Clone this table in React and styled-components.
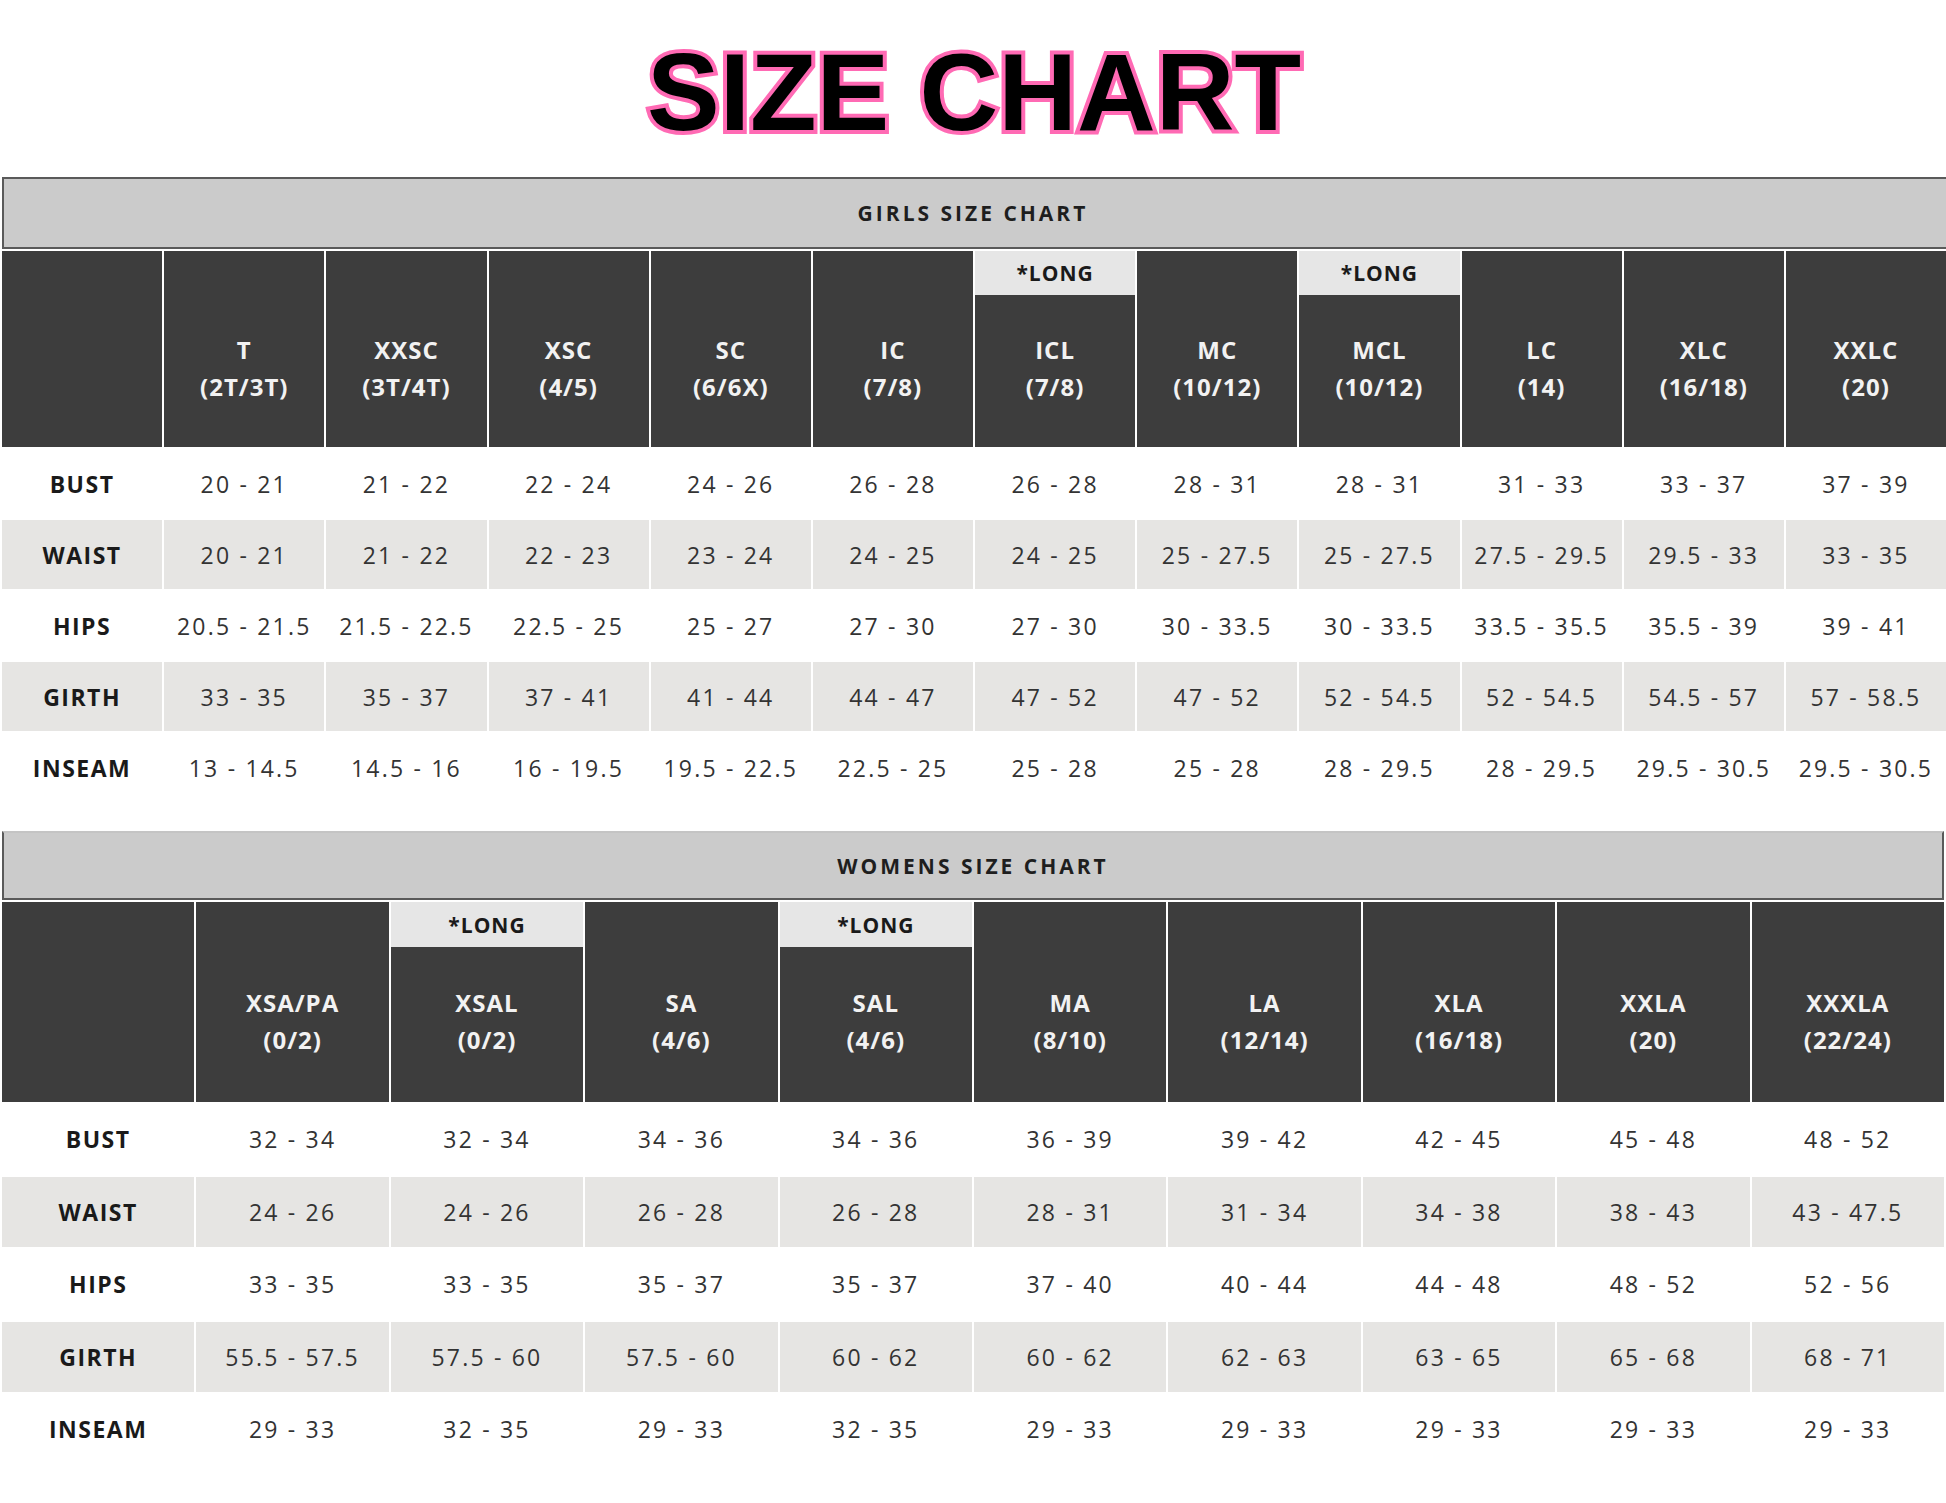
import styled, { createGlobalStyle } from 'styled-components';

const GlobalStyle = createGlobalStyle`
  html, body {
    margin: 0;
    padding: 0;
    background: #ffffff;
  }
  body {
    font-family: 'Open Sans', 'Liberation Sans', sans-serif;
    color: #333333;
  }
`;

const girls = {
  title: 'GIRLS SIZE CHART',
  barHeight: 72,
  headHeight: 196,
  bandHeight: 44,
  rowHeight: 69,
  sizes: [
    { name: 'T', fit: '(2T/3T)' },
    { name: 'XXSC', fit: '(3T/4T)' },
    { name: 'XSC', fit: '(4/5)' },
    { name: 'SC', fit: '(6/6X)' },
    { name: 'IC', fit: '(7/8)' },
    { name: 'ICL', fit: '(7/8)', long: true },
    { name: 'MC', fit: '(10/12)' },
    { name: 'MCL', fit: '(10/12)', long: true },
    { name: 'LC', fit: '(14)' },
    { name: 'XLC', fit: '(16/18)' },
    { name: 'XXLC', fit: '(20)' },
  ],
  rows: [
    ['BUST', '20 - 21', '21 - 22', '22 - 24', '24 - 26', '26 - 28', '26 - 28', '28 - 31', '28 - 31', '31 - 33', '33 - 37', '37 - 39'],
    ['WAIST', '20 - 21', '21 - 22', '22 - 23', '23 - 24', '24 - 25', '24 - 25', '25 - 27.5', '25 - 27.5', '27.5 - 29.5', '29.5 - 33', '33 - 35'],
    ['HIPS', '20.5 - 21.5', '21.5 - 22.5', '22.5 - 25', '25 - 27', '27 - 30', '27 - 30', '30 - 33.5', '30 - 33.5', '33.5 - 35.5', '35.5 - 39', '39 - 41'],
    ['GIRTH', '33 - 35', '35 - 37', '37 - 41', '41 - 44', '44 - 47', '47 - 52', '47 - 52', '52 - 54.5', '52 - 54.5', '54.5 - 57', '57 - 58.5'],
    ['INSEAM', '13 - 14.5', '14.5 - 16', '16 - 19.5', '19.5 - 22.5', '22.5 - 25', '25 - 28', '25 - 28', '28 - 29.5', '28 - 29.5', '29.5 - 30.5', '29.5 - 30.5'],
  ],
};

const womens = {
  title: 'WOMENS SIZE CHART',
  barHeight: 69,
  headHeight: 200,
  bandHeight: 45,
  rowHeight: 70.5,
  closed: true,
  sizes: [
    { name: 'XSA/PA', fit: '(0/2)' },
    { name: 'XSAL', fit: '(0/2)', long: true },
    { name: 'SA', fit: '(4/6)' },
    { name: 'SAL', fit: '(4/6)', long: true },
    { name: 'MA', fit: '(8/10)' },
    { name: 'LA', fit: '(12/14)' },
    { name: 'XLA', fit: '(16/18)' },
    { name: 'XXLA', fit: '(20)' },
    { name: 'XXXLA', fit: '(22/24)' },
  ],
  rows: [
    ['BUST', '32 - 34', '32 - 34', '34 - 36', '34 - 36', '36 - 39', '39 - 42', '42 - 45', '45 - 48', '48 - 52'],
    ['WAIST', '24 - 26', '24 - 26', '26 - 28', '26 - 28', '28 - 31', '31 - 34', '34 - 38', '38 - 43', '43 - 47.5'],
    ['HIPS', '33 - 35', '33 - 35', '35 - 37', '35 - 37', '37 - 40', '40 - 44', '44 - 48', '48 - 52', '52 - 56'],
    ['GIRTH', '55.5 - 57.5', '57.5 - 60', '57.5 - 60', '60 - 62', '60 - 62', '62 - 63', '63 - 65', '65 - 68', '68 - 71'],
    ['INSEAM', '29 - 33', '32 - 35', '29 - 33', '32 - 35', '29 - 33', '29 - 33', '29 - 33', '29 - 33', '29 - 33'],
  ],
};

function SizeTable({ chart }) {
  const cols = chart.sizes.length + 1;

  return (
    <Section closed={chart.closed}>
      <SectionBar height={chart.barHeight} closed={chart.closed}>
        {chart.title}
      </SectionBar>
      <Grid cols={cols} head={chart.headHeight} row={chart.rowHeight}>
        <HeadCell band={chart.bandHeight} />
        {chart.sizes.map((size) => (
          <HeadCell key={size.name + size.fit} band={chart.bandHeight}>
            <LongTag long={size.long}>{size.long ? '*LONG' : ''}</LongTag>
            <HeadMain>
              <span>{size.name}</span>
              <span>{size.fit}</span>
            </HeadMain>
          </HeadCell>
        ))}
        {chart.rows.map((row, r) =>
          row.map((value, c) =>
            c === 0 ? (
              <RowLabel key={`${r}-${c}`} shaded={r % 2 === 1}>
                {value}
              </RowLabel>
            ) : (
              <BodyCell key={`${r}-${c}`} shaded={r % 2 === 1}>
                {value}
              </BodyCell>
            )
          )
        )}
      </Grid>
    </Section>
  );
}

export default function App() {
  return (
    <>
      <GlobalStyle />
      <Page>
        <TitleWrap>
          <Title>SIZE CHART</Title>
        </TitleWrap>
        <SizeTable chart={girls} />
        <Spacer />
        <SizeTable chart={womens} />
      </Page>
    </>
  );
}

const Page = styled.div`
  width: 1946px;
  min-height: 1503px;
  overflow: hidden;
  padding: 0 0 0 2px;
  box-sizing: border-box;
`;

const TitleWrap = styled.header`
  height: 177px;
  padding-top: 37px;
  box-sizing: border-box;
  display: flex;
  justify-content: center;
  align-items: flex-start;
`;

const Title = styled.h1`
  margin: 0;
  font-family: 'Liberation Sans', Arial, sans-serif;
  font-weight: 700;
  font-size: 109px;
  line-height: 110px;
  color: #000000;
  -webkit-text-stroke: 8px #ff6ab4;
  paint-order: stroke fill;
`;

const Spacer = styled.div`
  height: 29px;
`;

const Section = styled.section`
  width: ${({ closed }) => (closed ? '1942px' : '1944px')};
`;

const SectionBar = styled.div`
  height: ${({ height }) => height}px;
  box-sizing: border-box;
  display: flex;
  align-items: center;
  justify-content: center;
  background: #cbcbcb;
  border: 2px solid #5a5a5a;
  border-top-color: ${({ closed }) => (closed ? '#c4c4c4' : '#5a5a5a')};
  border-right: ${({ closed }) => (closed ? '2px solid #5a5a5a' : 'none')};
  padding-right: ${({ closed }) => (closed ? '0' : '4px')};
  margin-bottom: 2px;
  font-weight: 700;
  font-size: 21px;
  letter-spacing: 3px;
  color: #1e1e1e;
`;

const Grid = styled.div`
  display: grid;
  grid-template-columns: repeat(${({ cols }) => cols}, 1fr);
  grid-template-rows: ${({ head }) => head}px repeat(5, ${({ row }) => row}px);
  gap: 2px;
`;

const HeadCell = styled.div`
  display: grid;
  grid-template-rows: ${({ band }) => band}px 1fr;
  background: #3d3d3d;
`;

const LongTag = styled.div`
  display: flex;
  align-items: center;
  justify-content: center;
  background: ${({ long }) => (long ? '#e6e6e6' : 'transparent')};
  color: #1a1a1a;
  font-weight: 700;
  font-size: 21px;
  letter-spacing: 1px;
`;

const HeadMain = styled.div`
  display: flex;
  flex-direction: column;
  align-items: center;
  justify-content: center;
  padding-bottom: 7px;
  color: #f2f2f2;
  font-weight: 700;
  font-size: 24px;
  line-height: 37px;
  letter-spacing: 1px;
`;

const BodyCell = styled.div`
  display: flex;
  align-items: center;
  justify-content: center;
  background: ${({ shaded }) => (shaded ? '#e6e5e3' : '#ffffff')};
  color: #333333;
  font-size: 23px;
  letter-spacing: 2.2px;
  white-space: nowrap;
`;

const RowLabel = styled(BodyCell)`
  color: #1a1a1a;
  font-weight: 700;
  letter-spacing: 1.5px;
`;
